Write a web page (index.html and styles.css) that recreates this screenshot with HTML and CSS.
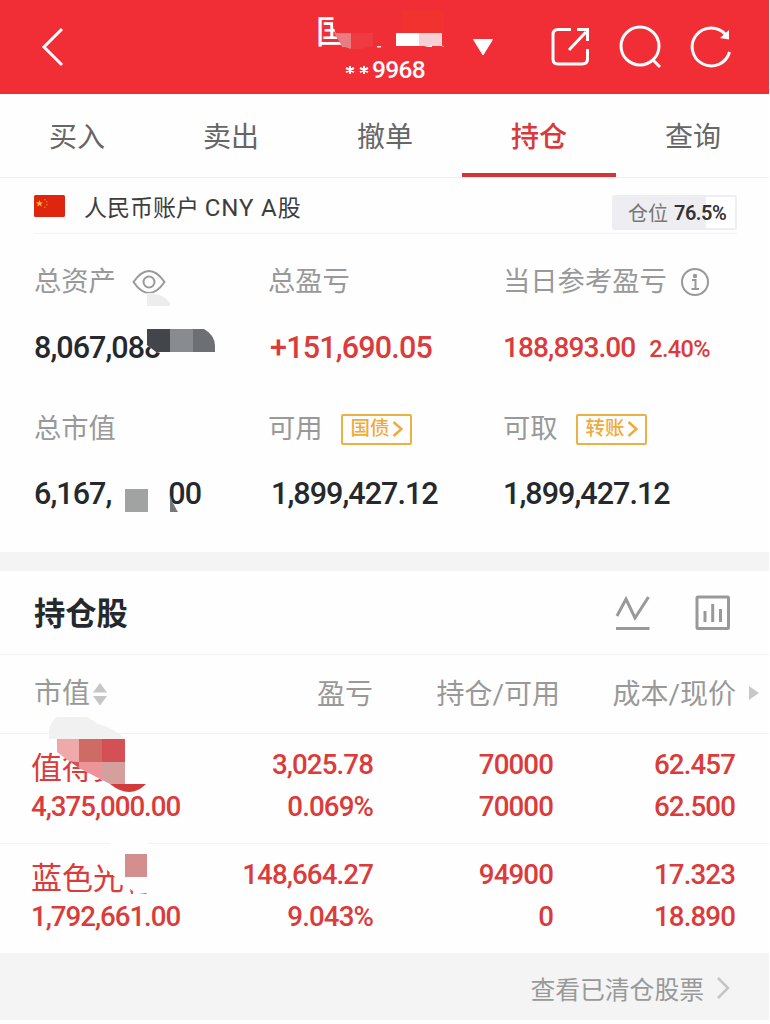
FILE: index.html
```html
<!DOCTYPE html>
<html lang="zh-CN">
<head>
<meta charset="utf-8">
<title>持仓</title>
<link rel="stylesheet" href="styles.css">
</head>
<body>
<div class="page">
  <header class="topbar">
    <svg class="back" width="24" height="40" viewBox="0 0 24 40"><path d="M21 2 3 20 21 38"/></svg>
    <div class="account">
      <div class="broker">国
        <svg class="mask broker-mask" width="136" height="52" viewBox="0 0 136 52">
          <path fill="#f02e36" d="M26 8H136V52H52L42 48 30 40 25 25Z"/>
          <path fill="#f1322f" d="M94 10h45v23H94z"/>
          <path fill="#e87c80" d="M26 33H43V49L34 46Z"/>
          <path fill="#ee3b42" d="M43 33H65V46L52 49H43Z"/>
          <path fill="#fff" d="M88 33h23v13H88z"/>
          <path fill="#f5d0d5" d="M111 33h23v13h-23z"/>
          <path fill="#fbe5e7" d="M69 46h4v1.500h-4zM116 47l8-2v2zM129 45l8 1v1z"/>
        </svg>
      </div>
      <div class="number"><svg width="24" height="10" viewBox="0 0 24 10"><path d="M5 1v8M1 3l8 4M9 3 1 7M19 1v8M15 3l8 4M23 3l-8 4"/></svg>9968</div>
    </div>
    <svg class="caret" width="22" height="18" viewBox="0 0 22 18"><path d="M1.500 1.500h19L11 17Z"/></svg>
    <svg class="tool share" width="42" height="42" viewBox="0 0 42 42"><path d="M21 3.500H8Q3 3.500 3 8.500V33Q3 38 8 38H32Q37.500 38 37.500 33V23M19 24 36 6M27 3.500H37.500V15"/></svg>
    <svg class="tool search" width="44" height="44" viewBox="0 0 44 44"><circle cx="21" cy="21" r="19"/><path d="m34 35 7 7"/></svg>
    <svg class="tool refresh" width="44" height="44" viewBox="0 0 44 44"><path d="M39.500 27A19 19 0 1 1 36 10"/><path class="solid" d="M39 5v9.500L30 13z"/></svg>
  </header>

  <nav class="tabs">
    <div class="tab">买入</div><div class="tab">卖出</div><div class="tab">撤单</div><div class="tab active">持仓</div><div class="tab">查询</div>
  </nav>

  <section class="currency">
    <svg class="flag" width="31" height="22" viewBox="0 0 31 22"><rect width="31" height="22" rx="1.500" fill="#de2510"/><path fill="#ffb52b" d="m5.500 5 1 2.500H9L7 9l.8 2.600-2.300-1.500-2.300 1.500L4 9 2 7.500h2.500z"/><path fill="#f36b24" d="M10 4h1.500v1.500H10zM12 6h1.500v1.500H12zM12 9h1.500v1.500H12zM10 11.500h1.500V13H10z"/></svg>
    <span class="currency-name">人民币账户 <span class="latin">CNY A</span>股</span>
    <div class="ratio"><span>仓位</span><b>76.5%</b></div>
  </section>

  <section class="metrics">
    <div class="label">总资产
      <svg class="eye" width="34" height="26" viewBox="0 0 34 26"><path d="M1.500 13Q9 2 17 2T32.500 13Q25 24 17 24T1.500 13Z"/><circle cx="17" cy="13" r="5.500"/></svg>
    </div>
    <div class="label">总盈亏</div>
    <div class="label">当日参考盈亏
      <svg class="info" width="30" height="30" viewBox="0 0 30 30"><circle cx="15" cy="15" r="13"/><path d="M12 13h3.500v8.500M11.500 22h7.500"/><circle class="dot" cx="15" cy="9" r="2.200"/></svg>
    </div>
    <div class="value">8,067,088
      <svg class="mask asset-mask" width="90" height="80" viewBox="0 0 90 80">
        <path fill="#fefefe" d="M10 36 15 45 22 52 31 59 36 60 38 72H90V30H14Z"/>
        <path fill="#ededed" d="M22 0h5q12 2 18 10v3H22z"/>
        <path fill="#424549" d="M22 36h23v23H31L22 52z"/><path fill="#888b8f" d="M45 36h23v23H45z"/><path fill="#6c7074" d="M68 36h11q11 6 11 17v6H68z"/>
      </svg>
    </div>
    <div class="value red profit">+151,690.05</div>
    <div class="value red today">188,893.00<small>2.40%</small></div>
    <div class="label">总市值</div>
    <div class="label">可用<span class="tag">国债<svg width="11" height="18" viewBox="0 0 11 18"><path d="m1.500 2 8 7-8 7"/></svg></span></div>
    <div class="label">可取<span class="tag">转账<svg width="11" height="18" viewBox="0 0 11 18"><path d="m1.500 2 8 7-8 7"/></svg></span></div>
    <div class="value split"><span>6,167,</span><span>00</span>
      <svg class="mask market-mask" width="54" height="34" viewBox="0 0 54 34"><path fill="#a1a3a3" d="M0 9h23v23H0z"/><path fill="#75797b" d="M45 15q2 8 8 17h-8z"/></svg>
    </div>
    <div class="value free">1,899,427.12</div>
    <div class="value">1,899,427.12</div>
  </section>

  <section class="holdings">
    <div class="heading">
      <h2>持仓股</h2>
      <svg width="36" height="36" viewBox="0 0 36 36"><path d="M2 21 11 4 20 23 33.500 2M1 33.500H34.500"/></svg>
      <svg width="36" height="36" viewBox="0 0 36 36"><rect x="2" y="2" width="31.500" height="31.500" rx="1"/><path d="M10 16v11M17.700 9v18M25.500 14v13"/></svg>
    </div>
    <div class="row head">
      <div>市值<svg width="14" height="24" viewBox="0 0 14 24"><path d="M7 1 14 10.500H0zM0 14h14L7 23.500z"/></svg></div>
      <div>盈亏</div><div>持仓/可用</div><div>成本/现价</div>
      <svg class="more" width="10" height="14" viewBox="0 0 10 14"><path d="m0 0 10 7-10 7z"/></svg>
    </div>
    <div class="row">
      <div><span class="name">值得买</span><br><span class="amount">4,375,000.00</span>
        <svg class="mask first-mask" width="102" height="80" viewBox="0 0 102 80">
          <path fill="#fefefe" d="M8 23V36L30 52 53 64 61 68 80 76 102 76V18H8Z"/>
          <path fill="#f1f1f1" d="M0 23V15Q1 6 8 1H38L49 8Q64 11 76 23Z"/>
          <path fill="#f0a9ab" d="M8 23h22v23L20 45 8 36z"/><path fill="#cd6b64" d="M30 23h23v23H30z"/><path fill="#d55054" d="M53 23h23v23H53z"/>
          <path fill="#d55054" d="m20 45 10 1v6z"/><path fill="#ec9497" d="M30 46h23v18L30 52z"/><path fill="#d49f9c" d="M53 46h23v22H61l-8-4z"/>
          <path fill="#d33b3a" d="M61 68H97Q89 76 80 76T61 68Z"/>
        </svg>
      </div>
      <div>3,025.78<br>0.069%</div><div>70000<br>70000</div><div>62.457<br>62.500</div>
    </div>
    <div class="row">
      <div><span class="name">蓝色光标</span><br><span class="amount">1,792,661.00</span>
        <svg class="mask second-mask" width="82" height="58" viewBox="0 0 82 58">
          <path fill="#fefefe" d="M29 25 39 34 47 39 48 52H82V5H72V0H34Z"/>
          <path fill="#d28f8e" d="M49 11h22v23H49z"/>
          <path fill="#dd5552" d="M54 46l3 2v3h-2zM63 51l7-1 1 1z"/>
        </svg>
      </div>
      <div>148,664.27<br>9.043%</div><div>94900<br>0</div><div>17.323<br>18.890</div>
    </div>
  </section>

  <footer class="closed">查看已清仓股票<svg width="14" height="24" viewBox="0 0 14 24"><path d="m2 2 10 10L2 22"/></svg></footer>
</div>
</body>
</html>
```

FILE: styles.css
```css
* { box-sizing: border-box; }
body { margin: 0; background: #fff; }
.page { width: 769px; height: 1024px; overflow: hidden; background: #fefefe; font-family: Roboto, "Noto Sans CJK SC", sans-serif; }
svg { fill: none; flex: none; }
.mask { position: absolute; }

.topbar { height: 94px; background: #f12e36; display: flex; align-items: center; padding-left: 41px; color: #fff; }
.topbar > svg { stroke: #fff; stroke-width: 3; }
.account { width: 112px; height: 94px; margin-left: 251px; padding-top: 11px; }
.broker { position: relative; font-size: 32px; line-height: 42px; font-weight: 500; white-space: nowrap; }
.broker-mask { left: -8px; top: -11px; }
.number { margin-left: 29px; margin-top: 3px; font-size: 24.500px; line-height: 28px; font-weight: 500; display: flex; align-items: center; gap: 3px; letter-spacing: -.7px; }
.number svg { stroke: #fff; stroke-width: 2; }
.topbar .caret { margin-left: 44px; fill: #fff; stroke: #fff; stroke-width: 1; stroke-linejoin: round; }
.share { margin-left: 56px; }
.search { margin-left: 27px; }
.refresh { margin-left: 27px; }
.topbar .solid { fill: #fff; stroke: none; }

.tabs { height: 84px; display: grid; grid-template-columns: repeat(5, 154px); border-bottom: 1px solid #f0f0f0; }
.tab { height: 84px; text-align: center; font-size: 28px; line-height: 88px; color: #666; }
.active { height: 83px; color: #d83a3a; font-weight: 500; border-bottom: 4px solid #d63337; }

.currency { height: 56px; margin: 0 32px 0 34px; display: flex; align-items: center; border-bottom: 1px solid #f3f3f4; color: #3d3d3d; }
.currency-name { margin-left: 19px; font-size: 23px; white-space: nowrap; }
.latin { font-size: 24px; letter-spacing: .9px; }
.ratio { margin-left: auto; margin-top: 14px; width: 125px; height: 35px; border: 2px solid #eeeef2; border-radius: 3px; background: linear-gradient(90deg, #eeeef2 92px, #fff 92px); display: flex; align-items: center; padding-left: 14px; gap: 6px; font-size: 20px; color: #777; white-space: nowrap; }
.ratio b { color: #333; font-weight: 600; letter-spacing: -.5px; }

.metrics { height: 318px; padding: 29px 0 0 34px; display: grid; grid-template-columns: 234px 235px 1fr; grid-template-rows: 40px 40px 40px 40px; row-gap: 23.500px; align-content: start; }
.label { display: flex; align-items: center; font-size: 27.300px; line-height: 36px; padding-bottom: 2px; color: #999; white-space: nowrap; height: 40px; }
.label svg { stroke: #999; stroke-width: 2; }
.eye { margin-left: 16px; }
.info { margin-left: 13px; }
.info .dot { fill: #999; stroke: none; }
.label:nth-child(n+7) { margin-top: 20px; }
.value { position: relative; height: 40px; line-height: 41px; font-size: 30.500px; font-weight: 500; letter-spacing: -.95px; color: #25292d; white-space: nowrap; }
.value:nth-child(n+10) { margin-top: 19px; }
.value.red { color: #db3b3a; }
.profit { padding-left: 2px; letter-spacing: -.8px; }
.value.today { font-size: 28px; letter-spacing: -.9px; line-height: 41px; }
.today small { font-size: 23.500px; letter-spacing: -.7px; margin-left: 14px; }
.asset-mask { left: 91px; top: -34px; }
.split { display: flex; }
.split span + span { margin-left: 57px; }
.market-mask { left: 91px; top: 7px; }
.free { padding-left: 3px; }
.label .tag { height: 31px; margin-left: 18px; border: 2px solid #efb043; border-radius: 2px; padding: 0 7px 1px 8px; display: flex; align-items: center; gap: 2px; font-size: 19.500px; font-weight: 500; color: #efaa3b; }
.tag svg { stroke: #efaa3b; stroke-width: 2.500; }

.holdings { border-top: 19px solid #f4f4f4; }
.heading { height: 84px; padding: 0 38px 0 34px; display: flex; align-items: center; border-bottom: 1px solid #f2f2f2; }
.heading h2 { margin: 5px auto 0 0; font-size: 31.300px; line-height: 40px; font-weight: 600; color: #25292d; }
.heading svg { stroke: #999; stroke-width: 3; }
.heading svg + svg { margin-left: 44px; }
.row { position: relative; height: 110px; padding: 10px 0 0 32px; display: grid; grid-template-columns: 181px 160px 180px 182px; text-align: right; font-size: 27.700px; line-height: 42px; font-weight: 500; letter-spacing: -.9px; color: #db3b3a; white-space: nowrap; }
.row + .row { border-top: 1px solid #f2f2f2; }
.row > div:first-child { text-align: left; position: relative; }
.amount { letter-spacing: -1.050px; margin-left: -1px; }
.row .name { display: inline-block; height: 42px; line-height: 49px; font-size: 31px; font-weight: 400; letter-spacing: 0; vertical-align: top; margin-left: -1px; }
.first-mask { left: 17px; top: -28px; }
.second-mask { left: 44px; top: -11px; }
.row.head { height: 79px; padding: 19px 0 0 34px; grid-template-columns: 179px 160px 187px 176px 1fr; font-size: 28px; font-weight: 400; color: #999; letter-spacing: 0; margin-bottom: -1px; }
.head > div:first-child { display: flex; align-items: center; gap: 3px; height: 42px; margin-top: -1px; }
.head > div:first-child svg { fill: #c6c6c6; }
.more { fill: #c8c8c8; margin: 12px 0 0 13px; }

.closed { height: 67px; background: #f4f4f4; display: flex; align-items: center; justify-content: flex-end; padding: 2px 39px 0 0; gap: 12px; font-size: 24.800px; color: #999; }
.closed svg { stroke: #c4c4c4; stroke-width: 2.500; }
```
